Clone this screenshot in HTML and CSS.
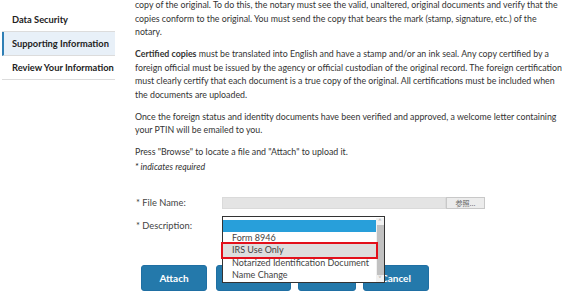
FILE: index.html
```html
<!DOCTYPE html>
<html lang="en">
<head>
    <meta charset="UTF-8">
    <title>Supporting Information</title>
    <link rel="stylesheet" href="styles.css">
</head>
<body>

<div class="page">
    <!-- Боковое меню -->
    <nav class="sidebar">
        <div class="nav-item">Data Security</div>
        <div class="nav-item active">Supporting Information</div>
        <div class="nav-item">Review Your Information</div>
    </nav>

    <!-- Основной текст и форма -->
    <main class="content">
        <p>copy of the original. To do this, the notary must see the valid, unaltered, original documents and verify that the copies conform to the original. You must send the copy that bears the mark (stamp, signature, etc.) of the notary.</p>
        <p><b>Certified copies</b> must be translated into English and have a stamp and/or an ink seal. Any copy certified by a foreign official must be issued by the agency or official custodian of the original record. The foreign certification must clearly certify that each document is a true copy of the original. All certifications must be included when the documents are uploaded.</p>
        <p>Once the foreign status and identity documents have been verified and approved, a welcome letter containing your PTIN will be emailed to you.</p>
        <p class="press">Press "Browse" to locate a file and "Attach" to upload it.</p>
        <p class="required">* indicates required</p>

        <div class="form">
            <div class="form-row">
                <label class="label">* File Name:</label>
                <div class="file-field">
                    <div class="file-path"></div>
                    <div class="file-btn">参照...</div>
                </div>
            </div>
            <div class="form-row desc-row">
                <label class="label">* Description:</label>
                <div class="select-wrap">
                    <div class="select"></div>
                    <!-- открытый список -->
                    <div class="listbox">
                        <div class="options">
                            <div class="option selected">&nbsp;</div>
                            <div class="option">Form 8946</div>
                            <div class="option hover">IRS Use Only</div>
                            <div class="option">Notarized Identification Document</div>
                            <div class="option">Name Change</div>
                        </div>
                        <div class="scrollbar">
                            <span class="arrow up">&#708;</span>
                            <span class="thumb"></span>
                            <span class="arrow down">&#709;</span>
                        </div>
                    </div>
                </div>
            </div>

            <!-- кнопки под списком закрыты им -->
            <div class="buttons">
                <button class="btn btn-attach">Attach</button>
                <button class="btn btn-remove"></button>
                <button class="btn btn-next"></button>
                <button class="btn btn-cancel">Cancel</button>
            </div>
        </div>
    </main>
</div>

</body>
</html>
```

FILE: styles.css
```css
/* Общие стили */
body {
    margin: 0;
    font-family: Lato, "Noto Sans", sans-serif;
    color: #333;
    background: #fff;
    overflow: hidden;
}
.page {
    display: flex;
    align-items: flex-start;
}

/* Боковое меню */
.sidebar {
    width: 113px;
    margin-left: 2px;
    padding-top: 8px;
    flex-shrink: 0;
}
.nav-item {
    height: 23px;
    line-height: 23px;
    padding-left: 10px;
    font-size: 9.3px;
    font-weight: bold;
    color: #222;
    white-space: nowrap;
    border-bottom: 1px solid #dcdcdc;
}
.nav-item.active {
    background-color: #e8f0f8;
    border-left: 2px solid #2f7fb5;
    padding-left: 8px;
}

/* Текст */
.content {
    margin-left: 20px;
    margin-top: -2px;
    width: 427px;
    font-size: 8.8px;
    line-height: 13.5px;
}
.content p {
    margin: 0 0 8.5px;
}
.content p.press { margin-bottom: 1.5px; }
.content p.required { font-style: italic; margin-bottom: 0; }

/* Форма */
.form {
    margin-top: 23px;
    color: #444;
}
.form-row {
    display: flex;
    align-items: flex-start;
}
.label {
    width: 86px;
    padding-left: 1px;
    font-size: 9.3px;
    line-height: 12px;
}
.desc-row {
    margin-top: 7px;
}
.desc-row .label {
    padding-top: 4px;
}
.file-field {
    display: flex;
    height: 12px;
}
.file-path {
    width: 224px;
    background: #e4e4e4;
    border: 1px solid #dadada;
    box-sizing: border-box;
}
.file-btn {
    width: 39px;
    box-sizing: border-box;
    background: #ececec;
    border: 1px solid #c8c8c8;
    font-family: "Noto Sans CJK JP", sans-serif;
    font-size: 7px;
    line-height: 10px;
    text-align: center;
    color: #666;
}

/* Выпадающий список */
.select-wrap {
    position: relative;
    width: 163px;
    height: 14px;
}
.select {
    height: 14px;
    border: 1px solid #bbb;
    box-sizing: border-box;
}
.listbox {
    position: absolute;
    top: 0;
    left: 0;
    width: 163px;
    height: 67px;
    box-sizing: border-box;
    border: 1px solid #333;
    background: #fff;
    display: flex;
    padding-top: 3px;
    z-index: 2;
}
.options {
    flex: 1;
}
.option {
    height: 12.5px;
    line-height: 12.5px;
    padding-left: 9px;
    font-size: 9px;
    color: #444;
    white-space: nowrap;
}
.option.selected {
    background: #289fda;
    height: 12px;
}
.option.hover {
    background: #dedede;
    outline: 2px solid #e3101b;
    position: relative;
}
.scrollbar {
    width: 8px;
    margin-top: -2px;
    background: #f1f1f1;
    display: flex;
    flex-direction: column;
    align-items: center;
}
.arrow {
    font-size: 7px;
    line-height: 7px;
    color: #aaa;
    height: 7px;
}
.thumb {
    width: 7px;
    flex: 1;
    background: #c1c1c1;
}

/* Кнопки */
.buttons {
    display: flex;
    gap: 7px;
    margin-top: 33px;
    padding-left: 6px;
}
.btn {
    height: 26px;
    border: 1px solid #1f6fa3;
    border-radius: 3px;
    background-color: #2479ab;
    color: #fff;
    font-family: Lato, sans-serif;
    font-weight: bold;
    font-size: 10px;
    padding: 0;
}
.btn-attach { width: 66px; margin-right: 2px; }
.btn-remove { width: 75px; }
.btn-next { width: 58px; }
.btn-cancel { width: 66px; }
```
